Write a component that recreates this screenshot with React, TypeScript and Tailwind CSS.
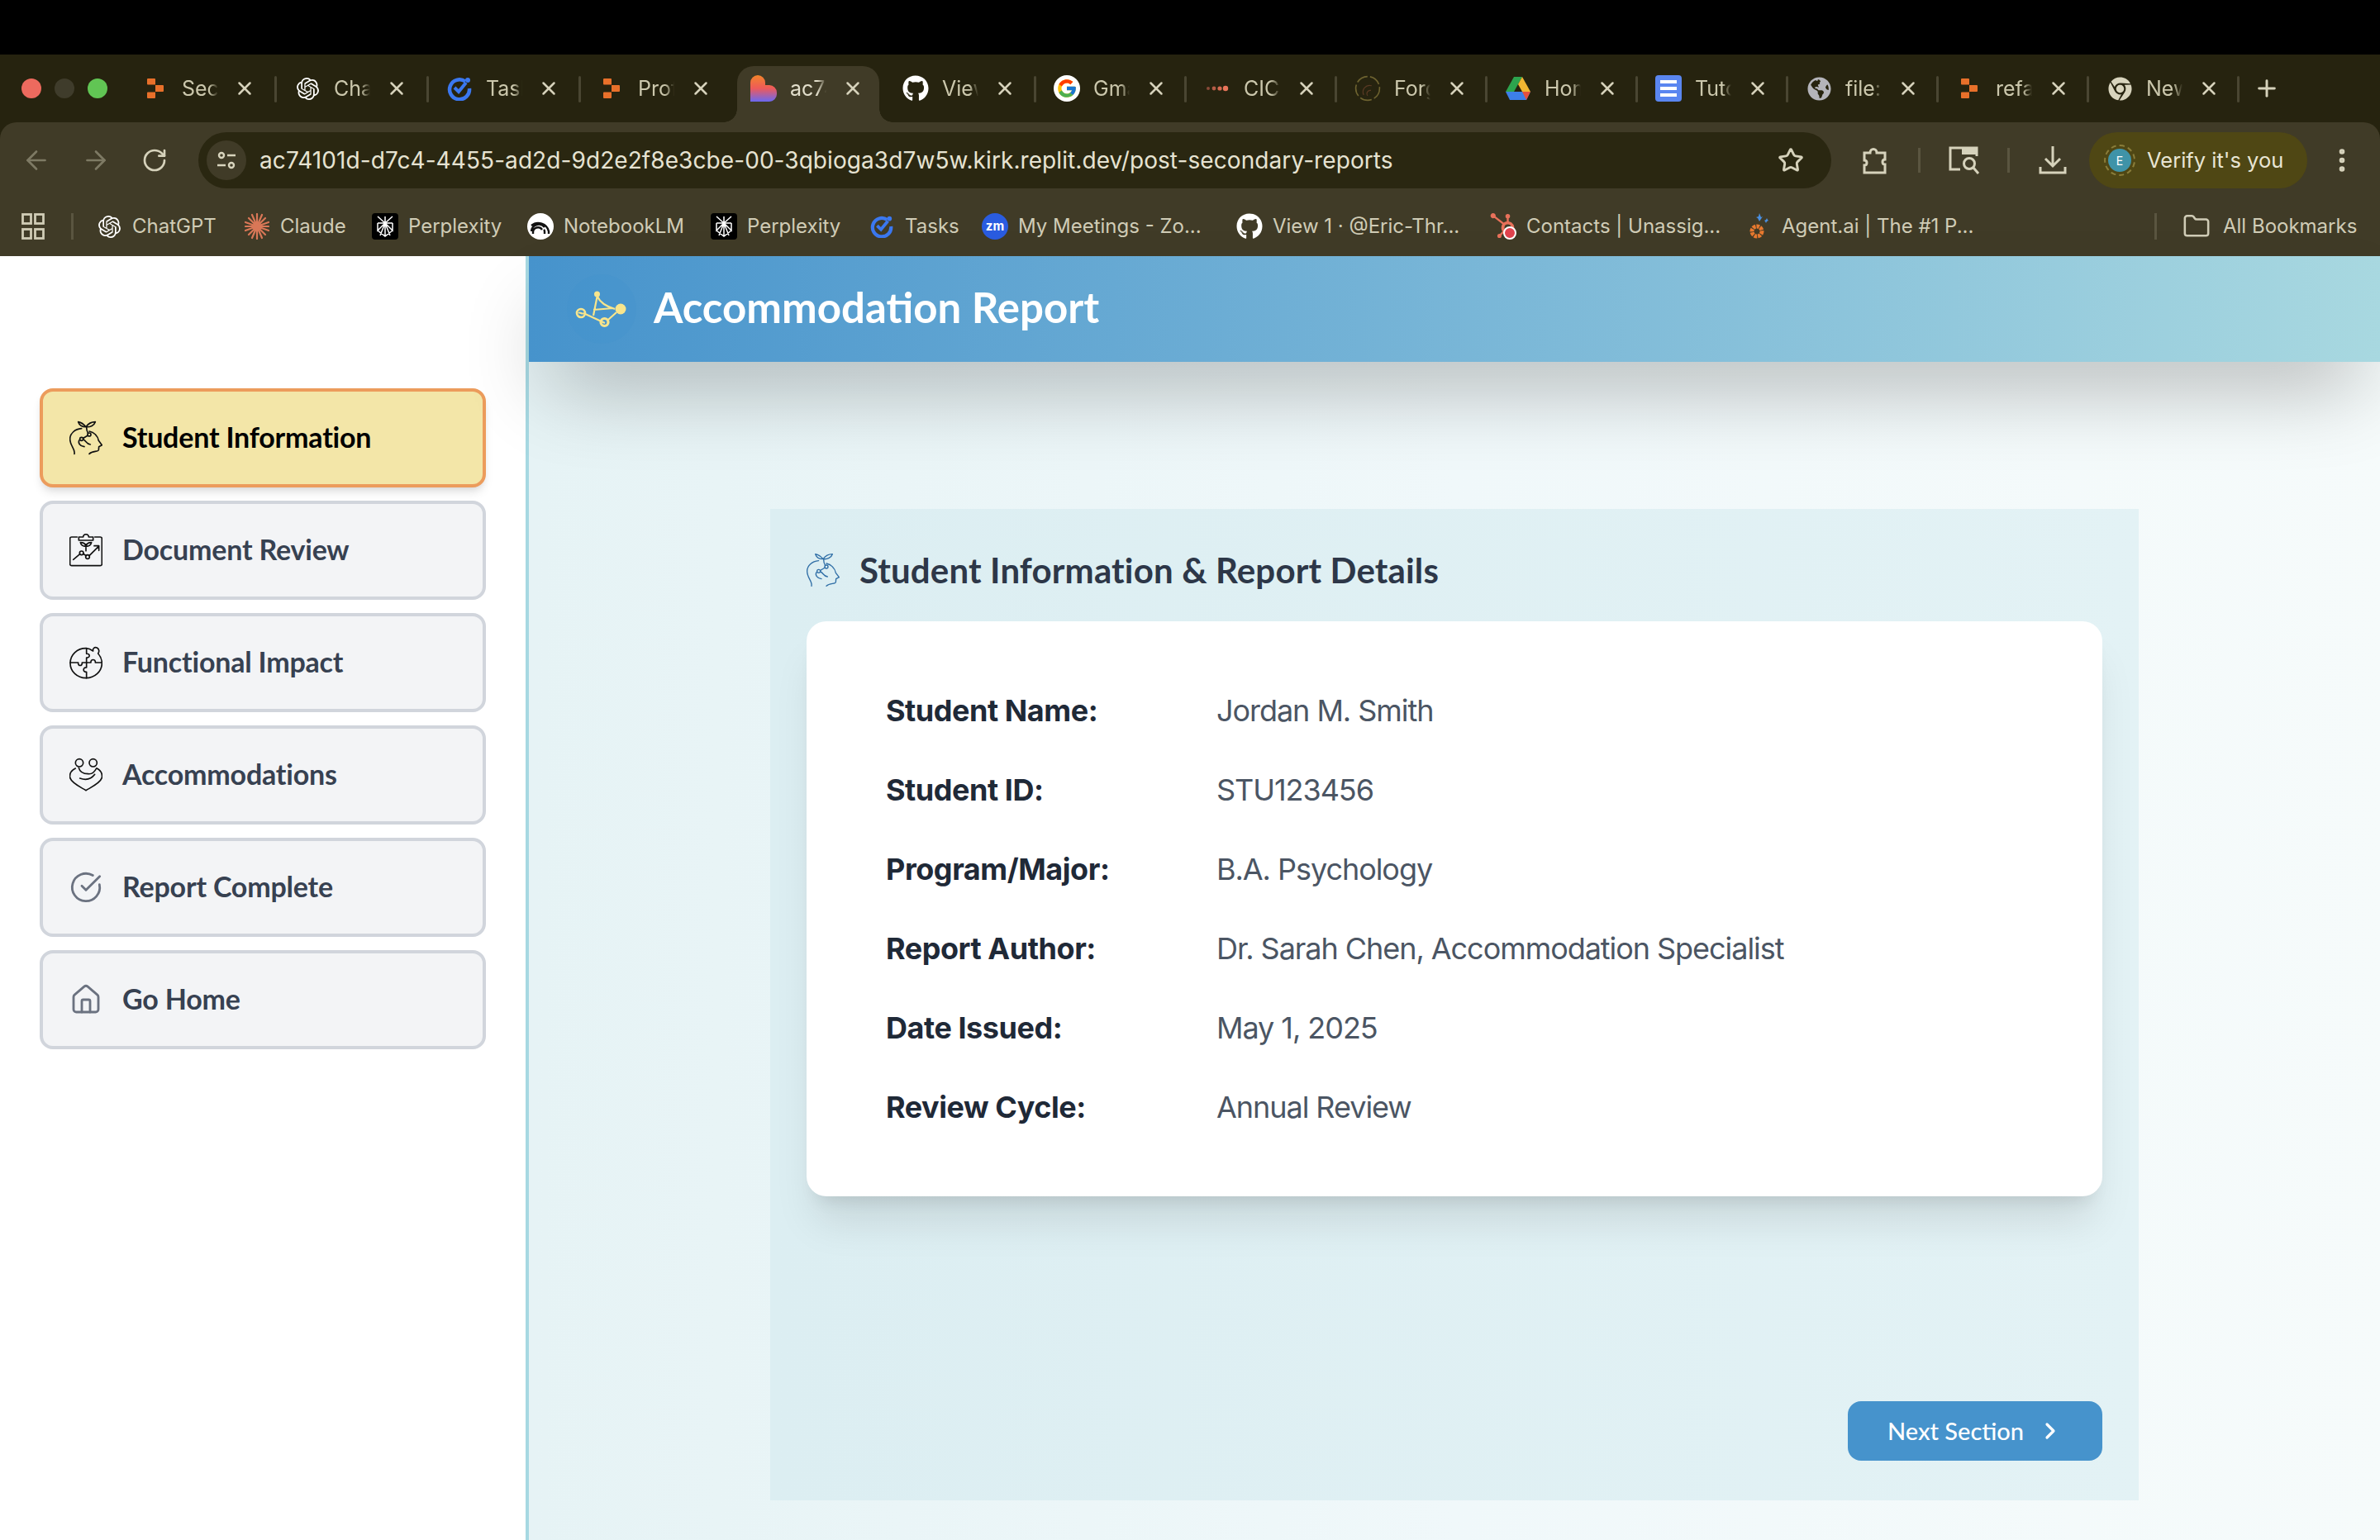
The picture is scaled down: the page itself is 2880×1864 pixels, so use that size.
import React from "react";
import { ArrowLeft, ArrowRight, RotateCw, Star, EllipsisVertical, Folder, X, Plus, CircleCheckBig, House, ChevronRight } from "lucide-react";
import { SiOpenai, SiHubspot } from "react-icons/si";
import { FaGithub, FaChrome, FaGlobeAmericas } from "react-icons/fa";
import { FcGoogle } from "react-icons/fc";

const Replit = () => (
  <svg width="20" height="24" viewBox="0 0 20 24" fill="#e8702a">
    <path d="M1 0h8a1 1 0 0 1 1 1v6.500H1a1 1 0 0 1-1-1V1a1 1 0 0 1 1-1z" />
    <path d="M10 8h9a1 1 0 0 1 1 1v6a1 1 0 0 1-1 1h-9z" />
    <path d="M1 16.500h9V23a1 1 0 0 1-1 1H1a1 1 0 0 1-1-1v-5.500a1 1 0 0 1 1-1z" />
  </svg>
);
const TaskIcon = ({ s = 30 }: { s?: number }) => (
  <svg width={s} height={s} viewBox="0 0 30 30" fill="none">
    <path d="M22 6.500A12 12 0 1 0 27 15" stroke="#3b78f0" strokeWidth="4.500" />
    <circle cx="25" cy="5" r="3" fill="#3b78f0" />
    <path d="M9 14l5 5 9-11" stroke="#3b78f0" strokeWidth="4" />
  </svg>
);
const Heart = () => (
  <svg width="32" height="32" viewBox="0 0 32 32">
    <defs>
      <linearGradient id="hg" x1="0" y1="0" x2="0" y2="1">
        <stop offset="0" stopColor="#f2842a" />
        <stop offset="0.5" stopColor="#ee5a5a" />
        <stop offset="1" stopColor="#6a68f2" />
      </linearGradient>
    </defs>
    <path d="M0 9a9 9 0 0 1 18 0v3h5a9 9 0 0 1 9 9v2a9 9 0 0 1-9 9H0z" fill="url(#hg)" />
  </svg>
);
const Dots = () => (
  <svg width="28" height="10" viewBox="0 0 28 10">
    <circle cx="3" cy="5" r="2" fill="#8a4a38" />
    <circle cx="10" cy="5" r="2.400" fill="#b55c46" />
    <circle cx="17" cy="5" r="2.600" fill="#d4694f" />
    <circle cx="24" cy="5" r="3.200" fill="#e8755a" />
  </svg>
);
const Forge = () => (
  <svg width="40" height="40" viewBox="0 0 40 40" fill="none">
    <circle cx="20" cy="20" r="18" stroke="#6e6330" strokeWidth="2" strokeDasharray="18 4" />
    <path d="M14 30a10 10 0 0 1 12-14M20 31a5 5 0 0 1 5-8" stroke="#5a3a24" strokeWidth="1.500" />
  </svg>
);
const Drive = () => (
  <svg width="30" height="28" viewBox="0 0 30 28">
    <polygon points="10,0 20,0 10,18 0,18" fill="#2da44e" />
    <polygon points="20,0 30,18 20,18 15,9" fill="#f2b632" />
    <polygon points="5,18 0,18 5,28 25,28 30,18" fill="#3d7fe8" />
    <polygon points="20,18 30,18 25,28" fill="#e5503f" />
  </svg>
);
const Docs = () => (
  <div className="flex flex-col items-center justify-center gap-[4px] w-[32px] h-[32px] rounded-[4px] bg-[#5a86f0]">
    <div className="w-[20px] h-[4px] bg-white" />
    <div className="w-[20px] h-[4px] bg-white" />
    <div className="w-[20px] h-[4px] bg-white" />
  </div>
);
const GithubBadge = () => <FaGithub className="text-white" size={32} />;
const GoogleBadge = () => (
  <div className="w-[32px] h-[32px] rounded-full bg-white flex items-center justify-center">
    <FcGoogle size={26} />
  </div>
);
const Perp = () => (
  <div className="w-[32px] h-[32px] rounded-[4px] bg-black flex items-center justify-center">
    <svg width="24" height="26" viewBox="0 0 24 26" fill="none" stroke="#fff" strokeWidth="1.500">
      <path d="M12 1v24M3 1l9 8 9-8M3 9h18M3 9v9l9-9 9 9V9M3 18l9 7 9-7M12 9l-6 15M12 9l6 15" />
    </svg>
  </div>
);
const Claude = () => (
  <svg width="30" height="32" viewBox="0 0 30 32" stroke="#d97757" strokeWidth="2.200" strokeLinecap="round">
    <path d="M15 1v30M1 16h28M5 6l20 20M25 6L5 26M9 2l12 28M21 2L9 30M1 11l28 10M29 11L1 21" />
  </svg>
);
const Notebook = () => (
  <div className="w-[32px] h-[32px] rounded-full bg-white flex items-center justify-center">
    <svg width="24" height="20" viewBox="0 0 24 20" fill="none" stroke="#111" strokeWidth="2.400">
      <path d="M1 16a9 9 0 0 1 16-5M3 19v-2a6 6 0 0 1 11-3M1 9a13 13 0 0 1 21 7v3M17 19v-3a3 3 0 0 0-1-2" />
    </svg>
  </div>
);
const Zoomy = () => (
  <div className="w-[32px] h-[32px] rounded-full bg-[#2a5ce0] flex items-center justify-center text-white text-[15px] font-bold font-['Inter',sans-serif]">zm</div>
);
const Hub = () => (
  <div className="relative w-[32px] h-[32px]">
    <SiHubspot size={30} className="text-[#e8715a]" />
    <div className="absolute right-0 bottom-0 w-[16px] h-[16px] rounded-full bg-[#e0434f] border-2 border-white" />
  </div>
);
const Agent = () => (
  <svg width="24" height="32" viewBox="0 0 24 32" fill="none">
    <path d="M13 0l2 5 2-1-2 3-2 3-2-4-2-1 3-1zM22 6l1 2 1 1-2 1-1 2-1-2-1-1 2-1z" fill="#4a90e2" />
    <circle cx="10" cy="22" r="6" stroke="#e8792f" strokeWidth="5" strokeDasharray="3.500 1" />
  </svg>
);
const Sites = () => (
  <svg width="24" height="24" viewBox="0 0 24 24" fill="none" stroke="#d8d4bd" strokeWidth="2.400">
    <circle cx="6" cy="6" r="3" />
    <path d="M13 6h10M1 18h10" />
    <circle cx="18" cy="18" r="3" />
  </svg>
);

const SproutHead = ({ color, w = 5 }: { color: string; w?: number }) => (
  <svg width="40" height="42" viewBox="0 0 120 120" fill="none" stroke={color} strokeWidth={w} strokeLinecap="round" strokeLinejoin="round">
    <path d="M18 118C22 100 2 90 2 64C2 44 20 28 44 26" />
    <path d="M72 36C90 40 103 54 106 70L118 86L107 92L106 104C104 112 84 106 72 118" />
    <path d="M60 20C50 8 42 4 32 2C36 14 46 20 60 20ZM60 20C70 6 82 2 94 2C90 14 76 22 60 20Z" />
    <path d="M62 22C62 30 64 38 68 44" />
    <circle cx="72" cy="48" r="6" />
    <circle cx="44" cy="64" r="6" />
    <path d="M67 51C60 56 54 58 50 62M50 66C60 68 60 82 76 84M36 68C30 78 38 90 54 92" />
  </svg>
);
const Clip = () => (
  <svg width="40" height="40" viewBox="0 0 120 120" fill="none" stroke="#111" strokeWidth="5" strokeLinecap="round" strokeLinejoin="round">
    <path d="M28 12H8a6 6 0 0 0-6 6v92a6 6 0 0 0 6 6h104a6 6 0 0 0 6-6V18a6 6 0 0 0-6-6H92" />
    <path d="M34 24V12h16a10 10 0 0 1 20 0h16v12z" />
    <path d="M60 62V38M60 46C50 46 42 42 40 32C50 32 58 36 60 46ZM60 46C70 46 78 42 80 32C70 32 62 36 60 46Z" />
    <path d="M14 94L38 74M50 72L60 80M72 80L106 46M90 44h17v17" />
    <circle cx="44" cy="70" r="7" />
    <circle cx="66" cy="84" r="7" />
  </svg>
);
const Puzzle = () => (
  <svg width="40" height="42" viewBox="0 0 120 120" fill="none" stroke="#111" strokeWidth="5" strokeLinecap="round" strokeLinejoin="round">
    <path d="M60 8C28 8 3 32 3 62C3 92 28 116 60 116C92 116 118 92 118 62C118 48 112 36 104 27C108 22 110 12 100 6C90 2 84 10 86 18C78 12 70 8 60 8Z" />
    <path d="M62 8V28C76 26 76 44 62 42V60H46C48 74 30 74 32 60H3" />
    <path d="M62 60H78C76 46 96 46 94 60H118M62 60V78C48 76 48 96 62 94V116" />
  </svg>
);
const Hug = () => (
  <svg width="40" height="42" viewBox="0 0 120 120" fill="none" stroke="#111" strokeWidth="5" strokeLinecap="round" strokeLinejoin="round">
    <circle cx="36" cy="16" r="14" />
    <circle cx="86" cy="16" r="14" />
    <path d="M22 36C6 44 0 58 2 70C8 90 40 104 60 116C80 104 112 90 118 70C120 58 114 44 100 36" />
    <path d="M34 34C38 50 52 56 68 56C84 58 92 48 98 36" />
    <path d="M38 72C60 80 80 74 92 58" />
  </svg>
);
const Logo = () => (
  <svg width="64" height="44" viewBox="0 0 64 44" fill="none" stroke="#f8e58c" strokeWidth="2.200" className="overflow-visible">
    <circle cx="32" cy="22" r="42" fill="#3f8ecb" fillOpacity="0.18" stroke="none" />
    <path d="M27 5L22 30M27 7C30 14 38 19 48 22M22 23L46 21M10 27L36 39M50 26L40 35" />
    <circle cx="55" cy="22" r="6.500" fill="#f8e58c" stroke="none" />
    <circle cx="26.500" cy="4" r="3.500" fill="#f8e58c" stroke="none" />
    <circle cx="7" cy="27" r="5" strokeWidth="2.600" />
    <circle cx="35.500" cy="38" r="4.500" strokeWidth="3.200" />
    <path d="M4 27c2-2 4 2 6 0" />
  </svg>
);

const TABS = [
  { t: "Sec", i: <Replit />, w: "w-[184px]" },
  { t: "Cha", i: <SiOpenai size={27} className="text-white" />, w: "w-[184px]" },
  { t: "Task", i: <TaskIcon />, w: "w-[184px]" },
  { t: "Prof", i: <Replit />, w: "w-[184px]", nosep: true },
  { t: "ac74", i: <Heart />, w: "w-[184px]", active: true, nosep: true },
  { t: "View", i: <GithubBadge />, w: "w-[183px]" },
  { t: "Gmail", i: <GoogleBadge />, w: "w-[182px]" },
  { t: "CIC", i: <Dots />, w: "w-[182px]" },
  { t: "Forge", i: <Forge />, w: "w-[182px]" },
  { t: "Home", i: <Drive />, w: "w-[182px]" },
  { t: "Tutor", i: <Docs />, w: "w-[182px]" },
  { t: "file:", i: <FaGlobeAmericas size={29} className="text-[#b4b4ba]" />, w: "w-[182px]" },
  { t: "refa", i: <Replit />, w: "w-[182px]" },
  { t: "New", i: <FaChrome size={29} className="text-[#d8d4bd]" />, w: "w-[182px]" },
];

const MARKS = [
  { t: "ChatGPT", i: <SiOpenai size={27} className="text-white" />, w: "w-[179px]" },
  { t: "Claude", i: <Claude />, w: "w-[155px]" },
  { t: "Perplexity", i: <Perp />, w: "w-[188px]" },
  { t: "NotebookLM", i: <Notebook />, w: "w-[222px]" },
  { t: "Perplexity", i: <Perp />, w: "w-[191px]" },
  { t: "Tasks", i: <TaskIcon s={28} />, w: "w-[137px]" },
  { t: "My Meetings - Zo...", i: <Zoomy />, w: "w-[308px]" },
  { t: "View 1 · @Eric-Thr...", i: <GithubBadge />, w: "w-[307px]" },
  { t: "Contacts | Unassig...", i: <Hub />, w: "w-[309px]" },
  { t: "Agent.ai | The #1 P...", i: <Agent />, w: "w-[495px]" },
];

const NAV = [
  { t: "Student Information", i: <SproutHead color="#111" />, active: true },
  { t: "Document Review", i: <Clip /> },
  { t: "Functional Impact", i: <Puzzle /> },
  { t: "Accommodations", i: <Hug /> },
  { t: "Report Complete", i: <CircleCheckBig size={44} strokeWidth={1.700} className="text-[#6b7280]" /> },
  { t: "Go Home", i: <House size={44} strokeWidth={1.700} className="text-[#6b7280]" /> },
];

const ROWS = [
  ["Student Name:", "Jordan M. Smith"],
  ["Student ID:", "STU123456"],
  ["Program/Major:", "B.A. Psychology"],
  ["Report Author:", "Dr. Sarah Chen, Accommodation Specialist"],
  ["Date Issued:", "May 1, 2025"],
  ["Review Cycle:", "Annual Review"],
];

export default function App() {
  return (
    <div className="w-[2880px] h-[1864px] overflow-hidden flex flex-col bg-white font-['Inter',sans-serif]">
      <div className="h-[66px] bg-black shrink-0" />

      <div className="h-[82px] shrink-0 bg-[#26230f] flex items-end">
        <div className="w-[150px] h-[68px] flex items-center pb-[14px] pl-[26px] gap-[16px]">
          <div className="w-[24px] h-[24px] rounded-full bg-[#ed6a5e]" />
          <div className="w-[24px] h-[24px] rounded-full bg-[#3f3c2b]" />
          <div className="w-[24px] h-[24px] rounded-full bg-[#61c554]" />
        </div>
        {TABS.map((tab, n) => (
          <div key={n} className={`relative ${tab.w} h-[68px] flex items-center pb-[14px] pl-[22px]`}>
            {tab.active && (
              <>
                <div className="absolute left-[6px] right-[6px] top-0 bottom-0 bg-[#403b27] rounded-t-[20px]" />
                <div className="absolute left-[-10px] bottom-0 w-[16px] h-[16px] bg-[radial-gradient(circle_at_0_0,transparent_15.500px,#403b27_16px)]" />
                <div className="absolute right-[-10px] bottom-0 w-[16px] h-[16px] bg-[radial-gradient(circle_at_100%_0,transparent_15.500px,#403b27_16px)]" />
              </>
            )}
            <div className="relative w-[32px] h-[32px] flex items-center justify-center shrink-0">{tab.i}</div>
            <div className={`relative ml-[16px] w-[44px] overflow-hidden whitespace-nowrap text-[25px] leading-[32px] [mask-image:linear-gradient(to_right,black_75%,transparent)] ${tab.active ? "text-[#e3dfcc]" : "text-[#cbc7ac]"}`}>{tab.t}</div>
            <X size={26} strokeWidth={2.300} className="relative ml-[19px] shrink-0 text-[#d6d2bb]" />
            {!tab.nosep && <div className="absolute right-[-1px] top-[12px] w-[3px] h-[32px] bg-[#4a4632] rounded" />}
          </div>
        ))}
        <div className="h-[68px] pb-[14px] pl-[18px] flex items-center">
          <Plus size={32} strokeWidth={2.200} className="text-[#d6d2bb]" />
        </div>
      </div>

      <div className="h-[162px] shrink-0 bg-[#26230f]">
        <div className="h-full bg-[#403b27] rounded-t-[20px] flex flex-col">
          <div className="h-[80px] pt-[12px] flex items-start shrink-0">
            <div className="flex h-[68px] w-[240px] items-center pl-[26px] gap-[36px]">
              <ArrowLeft size={36} strokeWidth={1.800} className="text-[#7e7a64]" />
              <ArrowRight size={36} strokeWidth={1.800} className="text-[#7e7a64]" />
              <RotateCw size={32} strokeWidth={2} className="ml-[1px] text-[#d6d2bb]" />
            </div>
            <div className="w-[1976px] h-[68px] rounded-full bg-[#2a2711] flex items-center pl-[10px] pr-[33px]">
              <div className="w-[48px] h-[48px] rounded-full bg-[#403b27] flex items-center justify-center">
                <Sites />
              </div>
              <div className="ml-[16px] flex-1 text-[#e6e3d2] text-[28px] whitespace-nowrap tracking-[0.08px]">ac74101d-d7c4-4455-ad2d-9d2e2f8e3cbe-00-3qbioga3d7w5w.kirk.replit.dev/post-secondary-reports</div>
              <Star size={32} strokeWidth={2.200} className="text-[#d6d2bb]" />
            </div>
            <div className="h-[68px] flex items-center pl-[36px]">
              <svg width="34" height="34" viewBox="0 0 34 34" fill="none" stroke="#d6d2bb" strokeWidth="3">
                <path d="M4 8h7c0-6 8-6 8 0h10v8c-4 0-4 6 0 6v10H4v-9c4 0 4-6 0-6z" />
              </svg>
              <div className="ml-[35px] w-[3px] h-[30px] bg-[#5a5540]" />
              <svg className="ml-[34px]" width="38" height="36" viewBox="0 0 38 36" fill="none" stroke="#d6d2bb" strokeWidth="3">
                <path d="M14 29H2V3h32v10" />
                <rect x="16" y="3" width="18" height="8" fill="#d6d2bb" stroke="none" />
                <circle cx="25" cy="22" r="6.500" />
                <path d="M30 27l6 7" />
              </svg>
              <div className="ml-[33px] w-[3px] h-[30px] bg-[#5a5540]" />
              <svg className="ml-[35px]" width="34" height="36" viewBox="0 0 34 36" fill="none" stroke="#d6d2bb" strokeWidth="3">
                <path d="M17 1v24M8 16l9 9 9-9M2 26v7h30v-7" />
              </svg>
              <div className="ml-[27px] w-[264px] h-[68px] rounded-full bg-[#4f4714] flex items-center pl-[18px]">
                <div className="w-[38px] h-[38px] rounded-full border-2 border-dashed border-[#8a7d3a] p-[2px] flex items-center justify-center shrink-0">
                  <div className="w-[28px] h-[28px] rounded-full bg-[#3f93a8] text-white text-[14px] flex items-center justify-center">E</div>
                </div>
                <div className="ml-[14px] text-[#e8e5d3] text-[25.500px] whitespace-nowrap">Verify it's you</div>
              </div>
              <EllipsisVertical size={36} strokeWidth={2.400} className="ml-[24px] text-[#d6d2bb]" />
            </div>
          </div>
          <div className="flex-1 flex items-center pt-[10px] text-[24px] text-[#d0ccb6]">
            <div className="w-[86px] pl-[26px] flex items-center shrink-0">
              <svg width="28" height="32" viewBox="0 0 28 32" fill="none" stroke="#d0ccb6" strokeWidth="2.800">
                <rect x="1.500" y="1.500" width="10" height="11" />
                <rect x="16.500" y="1.500" width="10" height="11" />
                <rect x="1.500" y="19.500" width="10" height="11" />
                <rect x="16.500" y="19.500" width="10" height="11" />
              </svg>
            </div>
            <div className="w-[3px] h-[32px] bg-[#5a5540] shrink-0" />
            <div className="w-[27px] shrink-0" />
            {MARKS.map((m, n) => (
              <div key={n} className={`${m.w} shrink-0 flex items-center`}>
                <div className="w-[32px] h-[32px] flex items-center justify-center shrink-0">{m.i}</div>
                <span className="ml-[12px] whitespace-nowrap">{m.t}</span>
              </div>
            ))}
            <div className="w-[3px] h-[32px] bg-[#5a5540] shrink-0" />
            <Folder size={34} strokeWidth={1.800} className="ml-[31px] shrink-0 text-[#d0ccb6]" />
            <span className="ml-[15px] whitespace-nowrap">All Bookmarks</span>
          </div>
        </div>
      </div>

      <div className="flex-1 flex min-h-0">
        <aside className="w-[640px] shrink-0 bg-white border-r-4 border-[#a6d8e2] pt-[160px] pl-[48px] flex flex-col gap-[16px]">
          {NAV.map((n) => (
            <div
              key={n.t}
              className={
                n.active
                  ? "w-[540px] h-[120px] rounded-[16px] border-4 border-[#ec9c5c] bg-[#f3e6a8] flex items-center pl-[32px] shadow-[0_8px_12px_-2px_rgba(0,0,0,0.1),0_4px_8px_-4px_rgba(0,0,0,0.1)]"
                  : "w-[540px] h-[120px] rounded-[16px] border-4 border-[#d1d5dc] bg-[#f3f4f6] flex items-center pl-[32px]"
              }
            >
              <div className="w-[40px] h-[44px] flex items-center justify-center shrink-0">{n.i}</div>
              <span className={`ml-[24px] pb-[3px] font-['Lato',sans-serif] font-bold text-[34px] tracking-[-0.2px] ${n.active ? "text-black" : "text-[#374151]"}`}>{n.t}</span>
            </div>
          ))}
        </aside>

        <main className="flex-1 min-w-0 bg-gradient-to-r from-[#e6f3f5] via-[#f0f8fa] to-[#f6fbfb] flex flex-col">
          <header className="relative h-[128px] shrink-0 bg-gradient-to-r from-[#4693cc] to-[#a8d8e0] flex items-center pl-[56px] shadow-[0_50px_100px_-24px_rgba(0,0,0,0.3)]">
            <Logo />
            <h1 className="ml-[31px] pb-[3px] font-['Lato',sans-serif] font-bold text-[51px] text-white">Accommodation Report</h1>
          </header>
          <div className="flex-1 pt-[178px] flex justify-center">
            <section className="w-[1656px] h-[1200px] bg-gradient-to-r from-[#dceef2] to-[#e3f2f5] px-[44px] pt-[44px] pb-[48px] flex flex-col">
              <div className="h-[60px] flex items-center shrink-0">
                <SproutHead color="#2f6ea6" w={4} />
                <h2 className="ml-[24px] font-['Lato',sans-serif] font-bold text-[42px] tracking-[0.15px] text-[#2d3748]">Student Information &amp; Report Details</h2>
              </div>
              <div className="mt-[32px] h-[696px] rounded-[24px] bg-white pl-[96px] py-[84px] shadow-[0_40px_50px_-10px_rgba(0,0,0,0.1),0_16px_20px_-12px_rgba(0,0,0,0.1)] grid grid-cols-[400px_1fr] auto-rows-[48px] gap-y-[48px] text-[36px] leading-[48px] shrink-0">
                {ROWS.map(([a, b]) => (
                  <React.Fragment key={a}>
                    <div className="font-bold tracking-[-0.45px] text-[#1f2937]">{a}</div>
                    <div className="tracking-[-1.05px] text-[#4b5563]">{b}</div>
                  </React.Fragment>
                ))}
              </div>
              <div className="mt-auto flex justify-end">
                <button className="w-[308px] h-[72px] rounded-[16px] bg-[#4693cc] text-white flex items-center pl-[48px] font-['Lato',sans-serif] font-medium text-[29px]">
                  Next Section
                  <ChevronRight size={32} strokeWidth={2.400} className="ml-[16px]" />
                </button>
              </div>
            </section>
          </div>
        </main>
      </div>
    </div>
  );
}
